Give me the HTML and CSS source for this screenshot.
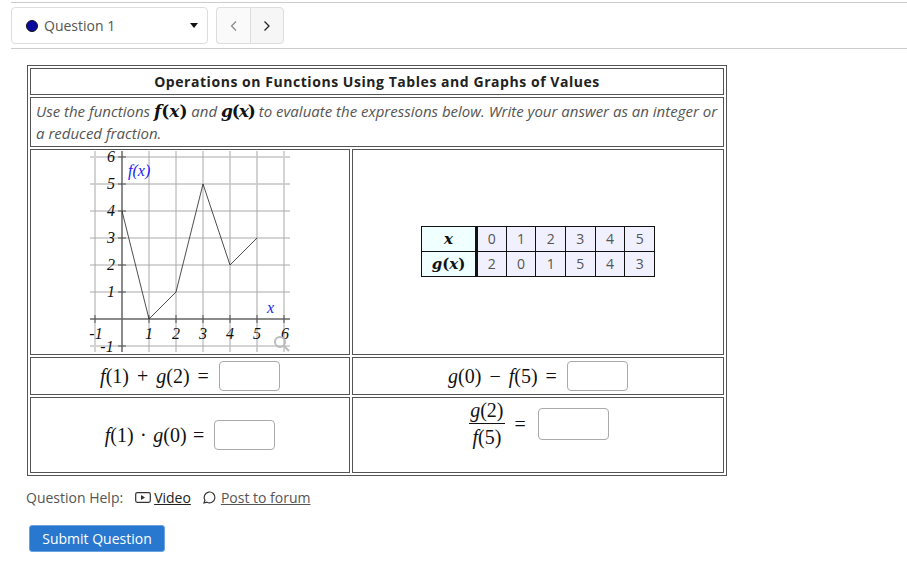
FILE: index.html
```html
<!DOCTYPE html>
<html lang="en">
<head>
<meta charset="utf-8">
<title>Question 1</title>
<link rel="stylesheet" href="styles.css">
</head>
<body>
<nav class="topbar">
  <div class="picker">
    <span class="dot"></span>
    <span class="picker-label">Question 1</span>
    <svg class="caret" width="8" height="5" viewBox="0 0 8 5"><path d="M0 0H8L4 5Z"/></svg>
  </div>
  <div class="pager">
    <button class="page page-off" type="button"><svg width="8" height="12" viewBox="0 0 8 12"><path d="M6 1.500L1.500 6l4.500 4.500" fill="none" stroke="#888" stroke-width="1.200"/></svg></button>
    <button class="page" type="button"><svg width="8" height="12" viewBox="0 0 8 12"><path d="M1.500 1.500L6 6l-4.500 4.500" fill="none" stroke="#222" stroke-width="1.300"/></svg></button>
  </div>
</nav>

<main class="question">
  <table class="sheet">
    <colgroup><col class="col-left"><col class="col-right"></colgroup>
    <tr class="row-title"><th colspan="2" class="title">Operations on Functions Using Tables and Graphs of Values</th></tr>
    <tr class="row-intro"><td colspan="2" class="intro">Use the functions <span class="m-bold m-f"><i>f</i>(<i>x</i>)</span> and <span class="m-bold m-g"><i>g</i>(<i>x</i>)</span> to evaluate the expressions below. Write your answer as an integer or a reduced fraction.</td></tr>
    <tr class="row-graph">
      <td class="graph-cell">
        <svg class="graph" width="318" height="204" viewBox="31 150 318 204">
          <g class="grid-light">
            <path d="M95 151V352M284 151V352M90 157H290M90 346H290"/>
          </g>
          <g class="grid-mid">
            <path d="M230 151V352M257 151V352M90 184H290"/>
          </g>
          <g class="grid">
            <path d="M149 151V352M176 151V352M203 151V352M90 211H290M90 238H290M90 265H290M90 292H290"/>
          </g>
          <g class="axis">
            <path d="M122 151V352M90 319H290"/>
          </g>
          <g class="ticks">
            <path d="M118 157H126M118 184H126M118 211H126M118 238H126M118 265H126M118 292H126M118 346H126M95 315V323M149 315V323M176 315V323M203 315V323M230 315V323M257 315V323M284 315V323"/>
          </g>
          <polyline class="curve" points="122,211 149,319 176,292 203,184 230,265 257,238"/>
          <g class="nums">
            <text x="111" y="162">6</text><text x="111" y="189">5</text><text x="111" y="216">4</text><text x="111" y="243">3</text><text x="111" y="270">2</text><text x="111" y="297">1</text><text x="107" y="352">-1</text>
            <text x="96" y="339">-1</text><text x="149" y="339">1</text><text x="176" y="339">2</text><text x="203" y="339">3</text><text x="230" y="339">4</text><text x="257" y="339">5</text><text x="285" y="339">6</text>
          </g>
          <text class="fn" x="128" y="176">f(x)</text>
          <text class="fn" x="267" y="313">x</text>
          <g class="zoom-mark"><circle cx="280" cy="342" r="5"/><path d="M284 346L289 351"/></g>
        </svg>
      </td>
      <td class="values-cell">
        <table class="values">
          <tr><th class="head"><span class="m-bold"><i>x</i></span></th><td>0</td><td>1</td><td>2</td><td>3</td><td>4</td><td>5</td></tr>
          <tr><th class="head"><span class="m-bold"><i>g</i>(<i>x</i>)</span></th><td>2</td><td>0</td><td>1</td><td>5</td><td>4</td><td>3</td></tr>
        </table>
      </td>
    </tr>
    <tr class="row-a">
      <td class="expr"><div class="line"><span class="math"><i>f</i>(1) + <i>g</i>(2) =</span><input class="answer" type="text" aria-label="answer 1"></div></td>
      <td class="expr"><div class="line"><span class="math"><i>g</i>(0) − <i>f</i>(5) =</span><input class="answer" type="text" aria-label="answer 2"></div></td>
    </tr>
    <tr class="row-b">
      <td class="expr"><div class="line"><span class="math"><i>f</i>(1) · <i>g</i>(0) =</span><input class="answer" type="text" aria-label="answer 3"></div></td>
      <td class="expr expr-top"><div class="line">
        <span class="frac"><span class="num"><i>g</i>(2)</span><span class="den"><i>f</i>(5)</span></span>
        <span class="math">=</span><input class="answer answer-wide" type="text" aria-label="answer 4"></div></td>
    </tr>
  </table>

  <div class="help">
    <span class="help-label">Question Help:</span>
    <a class="help-link dark" href="#"><svg width="16" height="13" viewBox="0 0 16 13"><rect x="0.700" y="1.700" width="14.600" height="9.600" rx="1.500" fill="none" stroke="#333" stroke-width="1.200"/><path d="M6 4v5l4-2.500Z" fill="#333"/></svg>Video</a>
    <a class="help-link" href="#"><svg width="15" height="15" viewBox="0 0 15 15"><path d="M3 13l.9-2.800A5.400 5.400 0 1 1 6 12.200Z" fill="none" stroke="#333" stroke-width="1.200"/></svg>Post to forum</a>
  </div>
  <button class="submit" type="button">Submit Question</button>
</main>
</body>
</html>
```
FILE: styles.css
```css
* { box-sizing: border-box; }
html, body { margin: 0; padding: 0; background: #fff; }
body { font-family: "Open Sans", "Liberation Sans", sans-serif; font-size: 14px; color: #555; }

.topbar {
  display: flex;
  gap: 8px;
  margin: 2px 0 0 11px;
  padding: 4px 0 3px;
  height: 47px;
  border-top: 1px solid #ccc;
  border-bottom: 1px solid #ccc;
}
.picker {
  display: flex;
  align-items: center;
  width: 197px;
  height: 37px;
  padding: 0 9px 0 14px;
  border: 1px solid #ddd;
  border-radius: 4px;
}
.dot {
  width: 12px;
  height: 12px;
  margin-right: 6px;
  border-radius: 50%;
  background: #0a0a9e;
  border: 1px solid #111;
}
.picker-label { flex: 1; }
.caret { fill: #111; }
.pager { display: flex; }
.page {
  display: flex;
  align-items: center;
  justify-content: center;
  width: 34px;
  height: 37px;
  padding: 0;
  border: 1px solid #ddd;
  border-radius: 0 4px 4px 0;
  background: #f6f6f6;
}
.page-off {
  border-right: 0;
  border-radius: 4px 0 0 4px;
  background: #fafafa;
}

.question { padding: 16px 0 0 26px; }
.sheet {
  width: 700px;
  margin-left: 1px;
  table-layout: fixed;
  border-collapse: separate;
  border-spacing: 2px;
  border: 1px solid #555;
}
.col-left { width: 320px; }
.sheet > tbody > tr > td, .sheet > tbody > tr > th {
  padding: 0;
  border: 1px solid #555;
}
.sheet > tbody > tr > td.expr { text-align: center; vertical-align: middle; }
.row-title { height: 27px; }
.row-intro { height: 50px; }
.row-graph { height: 206px; }
.row-a { height: 38px; }
.row-b { height: 76px; }

.title { font-size: 14px; font-weight: 700; color: #222; letter-spacing: 0.55px; text-align: center; }
.sheet > tbody > tr > td.intro { padding: 0 0 0 5px; font-size: 15px; font-style: italic; line-height: 22px; }
.m-bold { font-family: "DejaVu Serif", serif; font-weight: 700; font-size: 17px; line-height: 20px; color: #111; font-style: normal; }
.m-g { letter-spacing: -1.100px; }

.graph { display: block; }
.grid-light path { stroke: #d4d4d4; stroke-width: 2; fill: none; }
.grid-mid path { stroke: #c4c4c4; stroke-width: 1.500; fill: none; }
.grid path { stroke: #aaa; stroke-width: 1; fill: none; }
.axis path { stroke: #666; stroke-width: 1.500; fill: none; }
.ticks path { stroke: #555; stroke-width: 1; fill: none; }
.curve { fill: none; stroke: #222; stroke-width: 0.800; }
.nums text { font: italic 16px "Liberation Serif", serif; fill: #111; text-anchor: middle; }
.fn { font: italic 16px "Liberation Serif", serif; fill: #2222ee; }
.zoom-mark circle, .zoom-mark path { fill: none; stroke: #bbb; stroke-width: 2; }

.sheet > tbody > tr > td.values-cell { vertical-align: middle; padding-bottom: 2px; }
.values {
  width: 234px;
  margin: 0 0 0 68px;
  table-layout: fixed;
  border-collapse: collapse;
}
.values td, .values th {
  height: 25px;
  padding: 0;
  border: 1px solid #111;
  text-align: center;
  font-weight: 400;
  background: #f0f0ff;
}
.values th.head { width: 55px; background: #f0ffff; border-right: 3px solid #111; }
.values .m-bold { font-size: 15px; }

.line { display: flex; align-items: center; justify-content: center; gap: 10px; }
.math { font: 20px/1 "Liberation Serif", serif; word-spacing: 1.500px; color: #111; white-space: nowrap; }
.row-a .math { word-spacing: 3px; }
.answer {
  width: 61px;
  height: 30px;
  padding: 0;
  border: 1px solid #aaa;
  border-radius: 4px;
  background: #fff;
}
.answer-wide { width: 71px; height: 32px; margin-left: 2px; }
.sheet > tbody > tr > td.expr-top { vertical-align: top; padding: 2px 0 0 2px; }
.frac { display: inline-flex; flex-direction: column; font: 20px/1 "Liberation Serif", serif; color: #111; text-align: center; }
.num { padding: 0 1px 3px; border-bottom: 1px solid #111; }
.den { padding-top: 3px; }

.help { display: flex; align-items: center; margin-top: 11px; height: 20px; }
.help-label { margin-right: 12px; }
.help-link { display: inline-flex; align-items: center; gap: 5px; margin-right: 10px; color: #555; text-decoration: underline; }
.help-link.dark { color: #222; gap: 3px; }
.submit {
  display: block;
  margin: 18px 0 0 3px;
  width: 136px;
  height: 27px;
  padding: 0;
  border: 1px solid #6aa3e0;
  border-radius: 3px;
  background: #2878d0;
  color: #fff;
  font: 14px "Open Sans", sans-serif;
}
```
